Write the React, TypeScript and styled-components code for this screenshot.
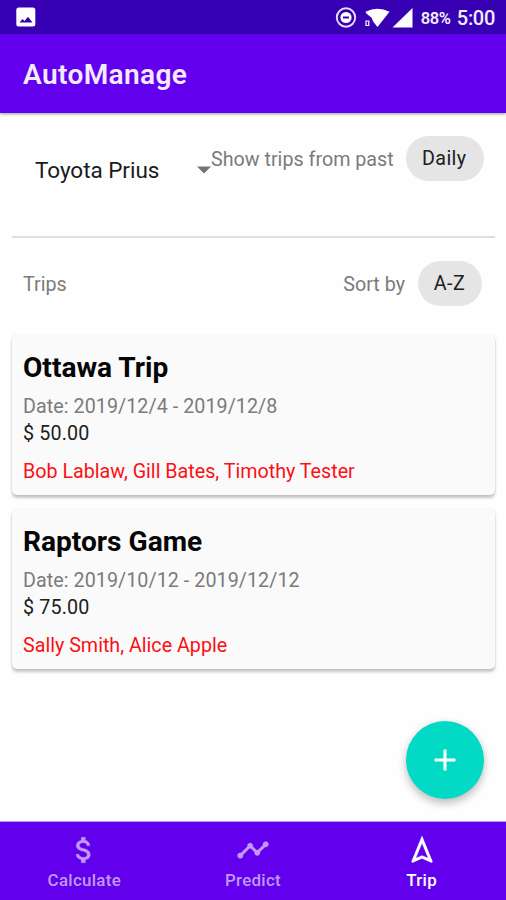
import React from "react";
import styled, { createGlobalStyle } from "styled-components";

const GlobalStyle = createGlobalStyle`
  * { box-sizing: border-box; }
  body { margin: 0; background: #fff; font-family: Roboto, sans-serif; }
  button { font-family: inherit; border: 0; padding: 0; }
`;

const Screen = styled.div`
  display: flex;
  flex-direction: column;
  width: 506px;
  height: 900px;
  background: #fefefe;
  overflow: hidden;
  position: relative;
`;

const StatusBar = styled.div`
  display: flex;
  align-items: center;
  flex: 0 0 34px;
  height: 34px;
  padding: 0 11px 0 16px;
  background: #3700b3;
  color: #f1edff;
`;

const StatusIcons = styled.div`
  display: flex;
  align-items: center;
  margin-left: auto;
`;

const Battery = styled.span`
  width: 36px;
  margin-left: 8px;
  font-size: 16.5px;
  font-weight: 600;
  letter-spacing: -0.4px;
  line-height: 30px;
  padding-top: 3px;
`;

const Clock = styled.span`
  font-size: 20px;
  font-weight: 500;
  letter-spacing: -0.3px;
  line-height: 30px;
  padding-top: 2px;
`;

const AppBar = styled.header`
  display: flex;
  align-items: center;
  flex: 0 0 79px;
  padding: 2px 23px 0;
  background: #6200ee;
  box-shadow: 0 1px 3px rgba(0, 0, 0, 0.4);
  z-index: 1;
`;

const AppTitle = styled.h1`
  margin: 0;
  color: #f3eaff;
  font-size: 28.1px;
  font-weight: 600;
  letter-spacing: 0.35px;
`;

const Content = styled.main`
  display: flex;
  flex-direction: column;
  flex: 1;
  padding: 23px 11px 0 12px;
`;

const FilterRow = styled.section`
  display: flex;
  height: 102px;
  align-items: flex-start;
  padding-right: 11px;
  border-bottom: 2px solid #dedede;
`;

const Vehicle = styled.div`
  display: flex;
  width: 199px;
  padding-left: 23px;
  color: #1b1b1b;
  font-size: 22.5px;
  line-height: 26px;
  letter-spacing: -0.04px;
  margin-top: 21px;
`;

const Arrow = styled.svg`
  display: block;
  margin: 9px 0 0 auto;
`;

const Label = styled.span<{ $top?: number; $gap?: number }>`
  color: #7b7b7b;
  font-size: 19.7px;
  line-height: 24px;
  letter-spacing: 0.01px;
  margin-top: ${({ $top = 0 }) => $top}px;
  margin-right: ${({ $gap = 0 }) => $gap}px;
  white-space: nowrap;
`;

const Chip = styled.button<{ $width: number }>`
  width: ${({ $width }) => $width}px;
  height: 45px;
  border-radius: 23px;
  background: #e5e5e5;
  color: #202020;
  font-size: 19.7px;
  letter-spacing: 0.4px;
  padding-right: 1px;
`;

const SortRow = styled.section`
  display: flex;
  align-items: center;
  justify-content: space-between;
  height: 45px;
  margin: 23px 13px 29px 11px;
`;

const SortControl = styled.div`
  display: flex;
  align-items: center;
`;

const TripCard = styled.article`
  height: 160px;
  margin-bottom: 14px;
  padding: 16px 11px 0;
  border-radius: 5px;
  background: #fafafa;
  box-shadow: 0 3px 3px rgba(0, 0, 0, 0.22), 0 0 2px rgba(0, 0, 0, 0.1);
`;

const TripTitle = styled.h2`
  margin: 0 0 9px;
  color: #060606;
  font-size: 28.1px;
  line-height: 33px;
  font-weight: 700;
  letter-spacing: 0;
`;

const TripDate = styled.div`
  color: #7b7b7b;
  font-size: 19.7px;
  line-height: 27px;
  letter-spacing: 0.06px;
`;

const TripCost = styled(TripDate)`
  color: #202020;
  letter-spacing: 0.15px;
`;

const People = styled(TripDate)`
  margin-top: 11px;
  color: #fb1014;
  letter-spacing: 0;
`;

const AddButton = styled.button`
  position: absolute;
  display: grid;
  place-items: center;
  right: 22px;
  bottom: 101px;
  width: 78px;
  height: 78px;
  border-radius: 50%;
  background: #03dac5;
  box-shadow: 0 5px 8px rgba(0, 0, 0, 0.2), 0 1px 10px rgba(0, 0, 0, 0.08);
`;

const Navigation = styled.nav`
  display: grid;
  grid-template-columns: repeat(3, 1fr);
  flex: 0 0 79px;
  border-top: 1px solid #b69bee;
  background: #6200ee;
`;

const NavItem = styled.button<{ $active?: boolean }>`
  display: flex;
  flex-direction: column;
  align-items: center;
  padding-top: 11px;
  background: transparent;
  color: ${({ $active }) => ($active ? "#ffffff" : "#c199f8")};
  font-size: 16.9px;
  font-weight: 500;
  line-height: 20px;
  letter-spacing: 0.3px;
  svg { display: block; margin-bottom: 3px; }
`;

const icons = {
  calculate: "M11.8 10.9c-2.27-.59-3-1.2-3-2.15 0-1.09 1.01-1.85 2.7-1.85 1.78 0 2.44.85 2.5 2.1h2.21c-.07-1.72-1.12-3.3-3.21-3.81V3h-3v2.16c-1.94.42-3.5 1.68-3.5 3.61 0 2.31 1.91 3.46 4.7 4.13 2.5.6 3 1.48 3 2.41 0 .69-.49 1.79-2.7 1.79-2.06 0-2.87-.92-2.98-2.1h-2.2c.12 2.19 1.76 3.42 3.68 3.83V21h3v-2.15c1.95-.37 3.5-1.5 3.5-3.55 0-2.84-2.43-3.81-4.7-4.4z",
  predict: "M23 8c0 1.1-.9 2-2 2-.18 0-.35-.02-.51-.07l-3.56 3.55c.05.16.07.34.07.52 0 1.1-.9 2-2 2s-2-.9-2-2c0-.18.02-.36.07-.52l-2.55-2.55c-.16.05-.34.07-.52.07s-.36-.02-.52-.07l-4.55 4.56c.05.16.07.33.07.51 0 1.1-.9 2-2 2s-2-.9-2-2 .9-2 2-2c.18 0 .35.02.51.07l4.56-4.55C8.02 9.36 8 9.18 8 9c0-1.1.9-2 2-2s2 .9 2 2c0 .18-.02.36-.07.52l2.55 2.55c.16-.05.34-.07.52-.07s.36.02.52.07l3.55-3.56C19.02 8.35 19 8.18 19 8c0-1.1.9-2 2-2s2 .9 2 2z",
  trip: "M12 7.27l4.28 10.43-3.47-1.53-.81-.36-.81.36-3.47 1.53L12 7.27M12 2L4.5 20.29l.71.71L12 18l6.79 3 .71-.71L12 2z",
};

const NavIcon = ({ path }: { path: string }) => (
  <svg width="34" height="34" viewBox="0 0 24 24" fill="currentColor" stroke="currentColor" strokeWidth="0.15"><path d={path} /></svg>
);

const trips = [
  { title: "Ottawa Trip", date: "2019/12/4 - 2019/12/8", cost: "50.00", people: "Bob Lablaw, Gill Bates, Timothy Tester" },
  { title: "Raptors Game", date: "2019/10/12 - 2019/12/12", cost: "75.00", people: "Sally Smith, Alice Apple" },
];

export default function App() {
  return (
    <>
      <GlobalStyle />
      <Screen>
        <StatusBar>
          <svg width="20" height="20" viewBox="0 0 20 20">
            <rect x=".3" y=".5" width="19" height="19" rx="2.5" fill="#fff" />
            <path d="M3.5 15.5 6.5 12l2 2 3.5-4.2 4.5 5.7z" fill="#3700b3" />
          </svg>
          <StatusIcons>
            <svg width="78" height="24" viewBox="0 0 78 24" fill="#fff">
              <circle cx="11" cy="12.5" r="9.2" fill="none" stroke="#e6dfff" strokeWidth="1.9" />
              <circle cx="11" cy="12.5" r="5.6" />
              <path d="M8 11.5h6v2H8z" fill="#3700b3" />
              <path d="M30.5 6.8q12-6.2 24 0L42.5 22l-4.2-5.2-1.7-4-5.5-4.5z" />
              <path d="M31 16h2.8v4.5H31z" fill="none" stroke="#fff" strokeWidth="1.2" />
              <path d="M77.5 3v19.5H57.5z" />
            </svg>
            <Battery>88%</Battery>
            <Clock>5:00</Clock>
          </StatusIcons>
        </StatusBar>
        <AppBar><AppTitle>AutoManage</AppTitle></AppBar>
        <Content>
          <FilterRow>
            <Vehicle>
              Toyota Prius
              <Arrow width="14" height="8" viewBox="0 0 14 8"><path d="M0 .5h14l-7 7z" fill="#747474" /></Arrow>
            </Vehicle>
            <Label $top={12} $gap={12}>Show trips from past</Label>
            <Chip $width={78}>Daily</Chip>
          </FilterRow>
          <SortRow>
            <Label $top={2}>Trips</Label>
            <SortControl>
              <Label $top={2} $gap={13}>Sort by</Label>
              <Chip $width={64}>A-Z</Chip>
            </SortControl>
          </SortRow>
          {trips.map((trip) => (
            <TripCard key={trip.title}>
              <TripTitle>{trip.title}</TripTitle>
              <TripDate>Date: {trip.date}</TripDate>
              <TripCost>$ {trip.cost}</TripCost>
              <People>{trip.people}</People>
            </TripCard>
          ))}
        </Content>
        <AddButton aria-label="Add trip">
          <svg width="22" height="22" viewBox="0 0 22 22"><path d="M11 .5v21M.5 11h21" stroke="#fff" strokeWidth="3" /></svg>
        </AddButton>
        <Navigation>
          <NavItem><NavIcon path={icons.calculate} />Calculate</NavItem>
          <NavItem><NavIcon path={icons.predict} />Predict</NavItem>
          <NavItem $active><NavIcon path={icons.trip} />Trip</NavItem>
        </Navigation>
      </Screen>
    </>
  );
}
